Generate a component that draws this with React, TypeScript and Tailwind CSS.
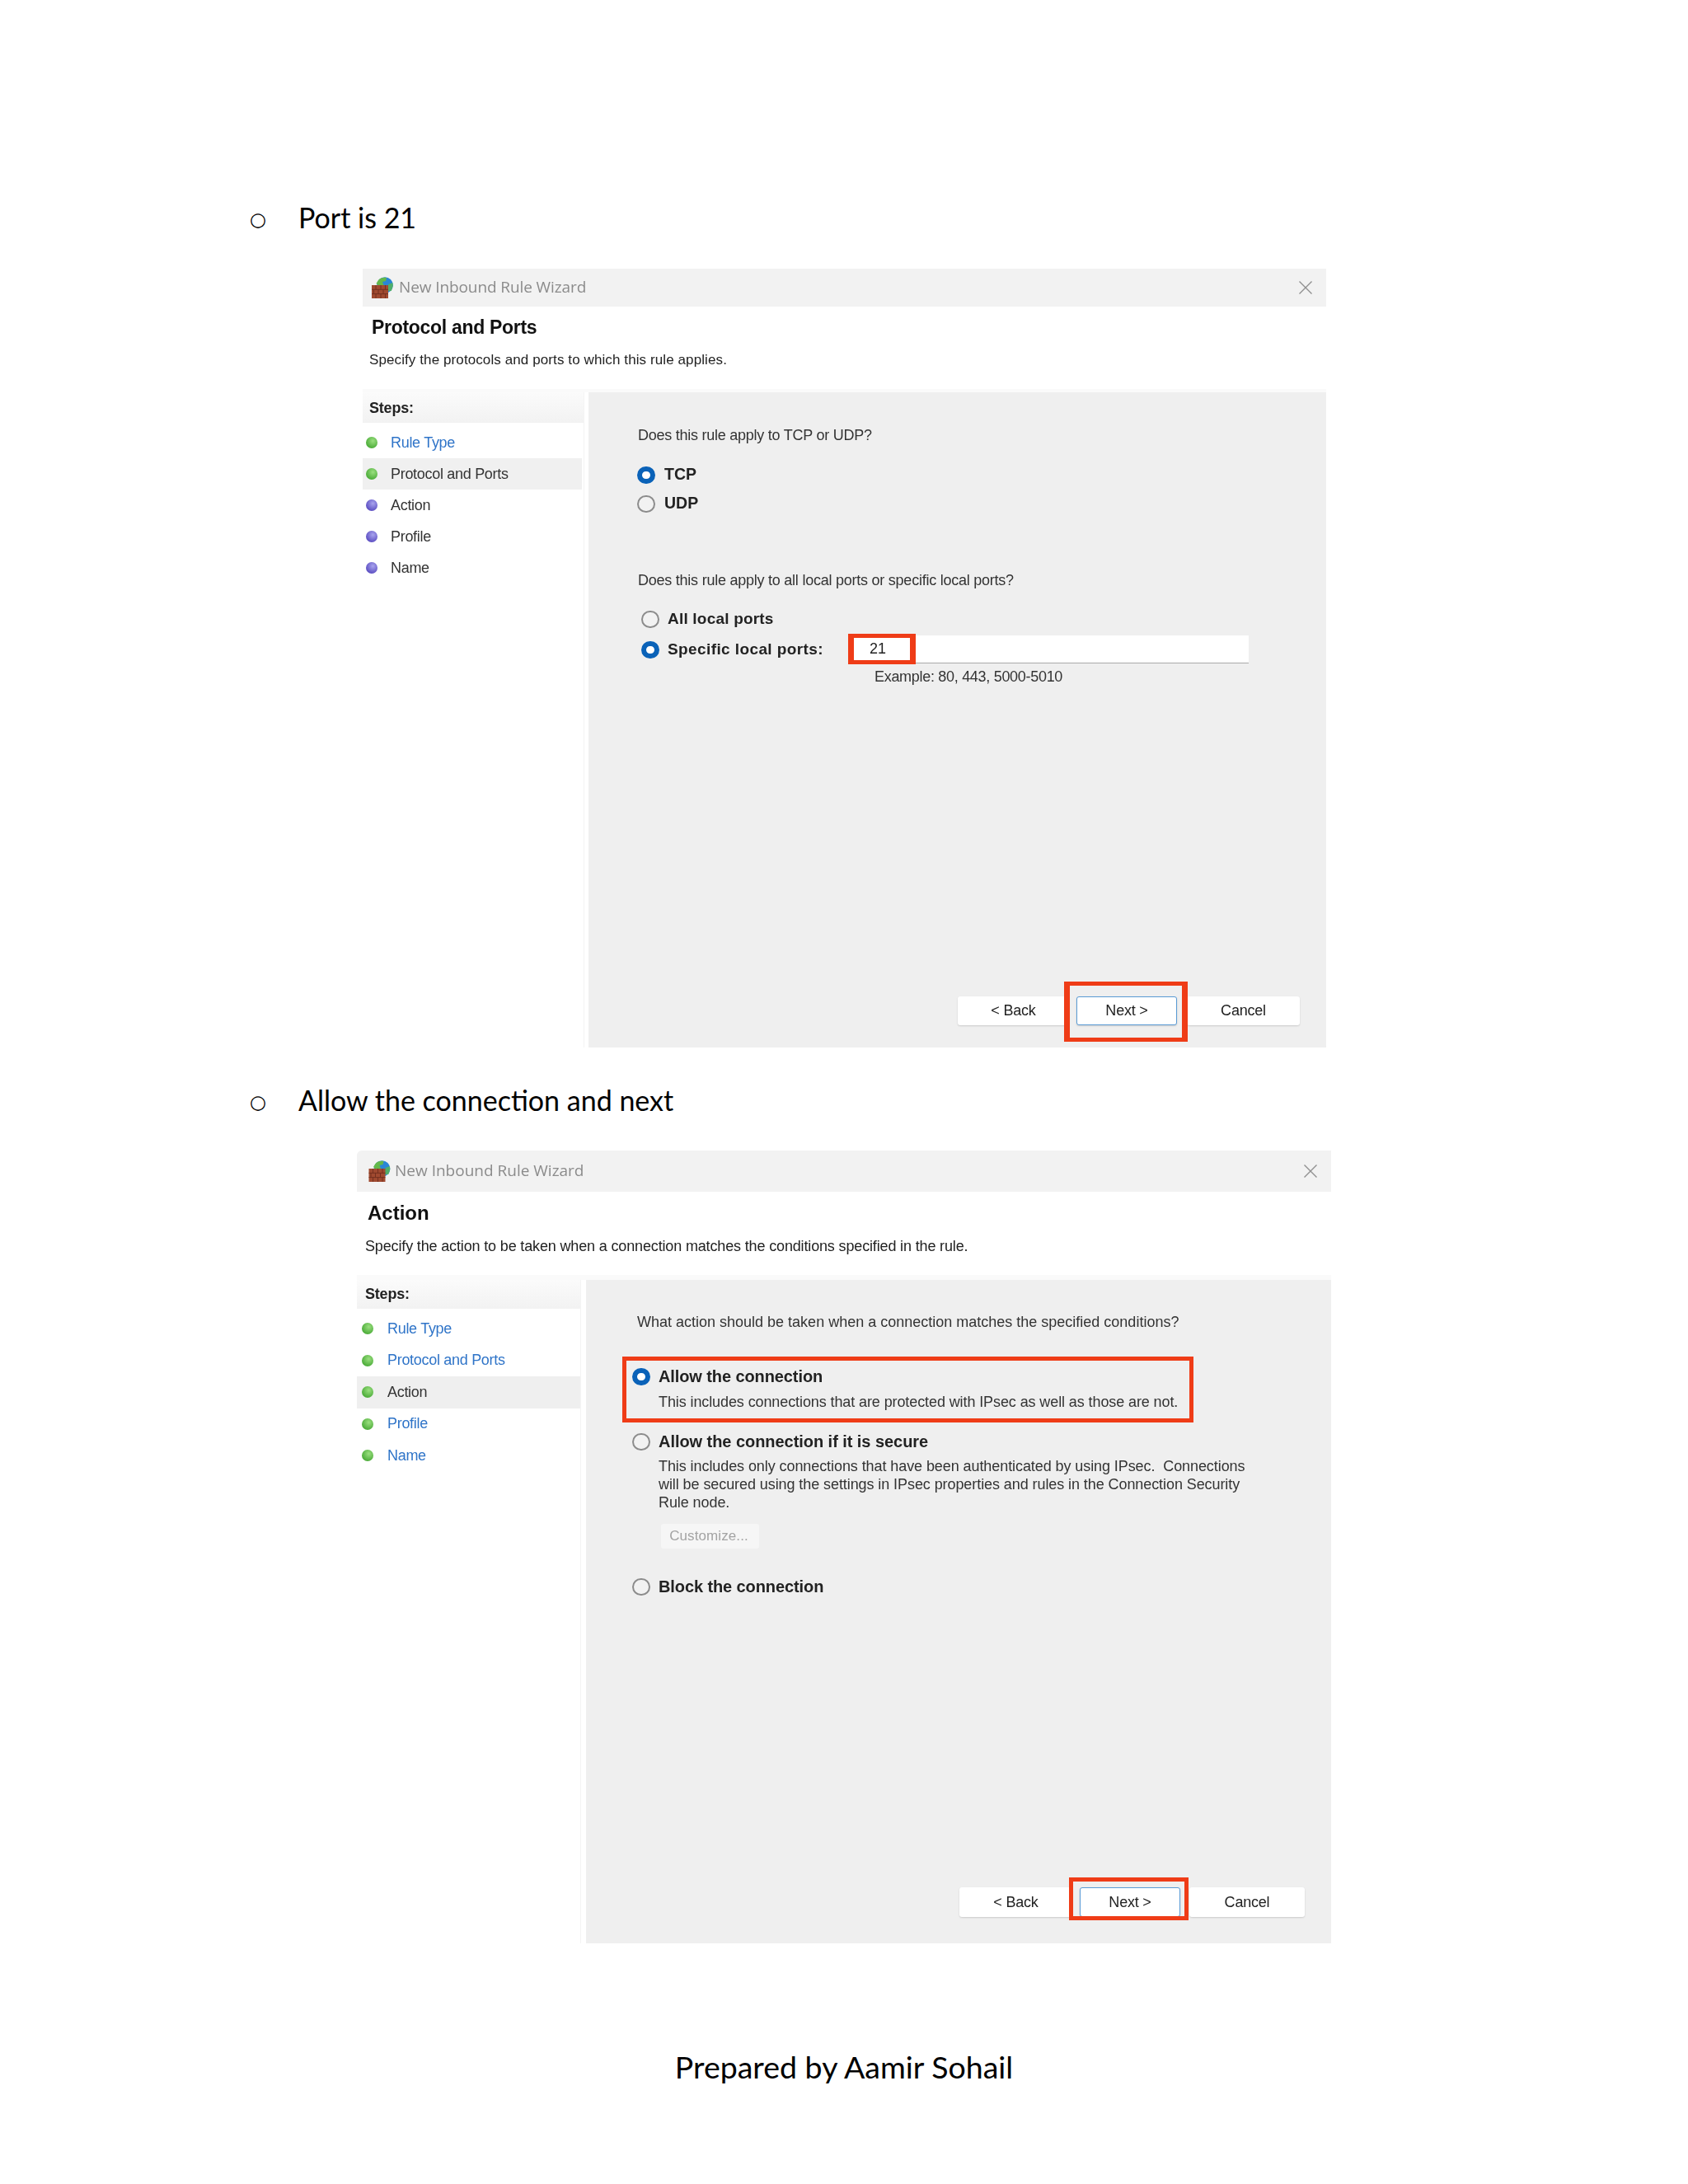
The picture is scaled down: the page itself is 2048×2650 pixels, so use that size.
import React from "react";

const sans = "font-['Liberation_Sans',Arial,sans-serif]";

function FirewallIcon({ className }: { className: string }) {
  return (
    <svg viewBox="0 0 26 26" className={className}>
      <circle cx="16" cy="10" r="9.800" fill="#2a86d6" />
      <path d="M8 4c2.500-3 6.500-3.800 10-3l-1 4-4 1 1.500 4-6 1-3-3z" fill="#63b84a" />
      <path d="M20 9l5.500-2 0.300 4-2 6-4.800 0z" fill="#4fae6a" />
      <rect x="0" y="10" width="20" height="16" fill="#a04a30" />
      <path d="M0 15.300h20M0 20.600h20M5 10v5.300M11 10v5.300M16.500 10v5.300M2.500 15.300v5.300M8 15.300v5.300M14 15.300v5.300M5 20.600v5.400M11 20.600v5.400M16.500 20.600v5.400" stroke="#702e1e" strokeWidth="0.9" fill="none" />
    </svg>
  );
}

function CloseX() {
  return (
    <svg viewBox="0 0 20 20" className="w-[20px] h-[20px]" fill="none" stroke="#8f8f8f" strokeWidth="1.4">
      <path d="M2.500 2.500L17.500 17.500M17.500 2.500L2.500 17.500" />
    </svg>
  );
}

function Radio({ checked }: { checked?: boolean }) {
  return checked ? (
    <span className="block w-[22px] h-[21px] shrink-0 rounded-full border-[6px] border-[#0a62b8] bg-white" />
  ) : (
    <span className="block w-[22px] h-[21px] shrink-0 rounded-full border-2 border-[#8c8c8c] bg-[#f2f2f2]" />
  );
}

function Dot({ purple }: { purple?: boolean }) {
  return purple ? (
    <span className="block w-[14px] h-[14px] shrink-0 rounded-full bg-[radial-gradient(circle_at_60%_35%,#a9a4ee,#5f52c4_70%)]" />
  ) : (
    <span className="block w-[14px] h-[14px] shrink-0 rounded-full bg-[radial-gradient(circle_at_60%_35%,#9adf7f,#4fae3c_70%)]" />
  );
}

function Heading({ children }: { children: React.ReactNode }) {
  return (
    <div className="flex items-center h-[44px] pl-[303px]">
      <span className="w-[59px] mt-[4px] font-['DejaVu_Sans',sans-serif] text-[23px] leading-[44px] text-black">○</span>
      <span className="font-['Lato',sans-serif] text-[34px] leading-[44px] text-black">{children}</span>
    </div>
  );
}

function Button({ label, extra }: { label: string; extra: string }) {
  return (
    <div className={`flex items-center justify-center bg-white rounded-[3px] shadow-[0_1px_2px_rgba(0,0,0,0.15)] text-[18px] tracking-[-0.2px] text-[#222] ${extra}`}>
      {label}
    </div>
  );
}

function WizardOne() {
  const steps = [
    { t: "Rule Type", link: true },
    { t: "Protocol and Ports", active: true },
    { t: "Action", purple: true },
    { t: "Profile", purple: true },
    { t: "Name", purple: true },
  ];
  return (
    <div className={`ml-[440px] mt-[40px] w-[1169px] h-[945px] flex flex-col bg-white ${sans} blur-[0.4px]`}>
      <div className="h-[46px] bg-[#f2f2f2] flex items-center pl-[11px] pr-[15px]">
        <FirewallIcon className="w-[26px] h-[26px]" />
        <span className="ml-[7px] mt-[-2px] text-[19px] tracking-[-0.1px] text-[#8b8b8b] font-['Open_Sans',sans-serif]">New Inbound Rule Wizard</span>
        <span className="ml-auto"><CloseX /></span>
      </div>
      <div className="h-[104px] pt-[13px] border-b-[4px] border-[#fafafa]">
        <div className="h-[24px] pl-[11px] text-[23px] leading-[24px] font-bold tracking-[-0.3px] text-[#111]">Protocol and Ports</div>
        <div className="h-[24px] mt-[16px] pl-[8px] text-[17px] leading-[24px] tracking-[0.1px] text-[#222]">Specify the protocols and ports to which this rule applies.</div>
      </div>
      <div className="flex-1 flex gap-[5px]">
        <div className="w-[269px] border-r border-[#f4f4f4]">
          <div className="h-[37px] pl-[8px] pt-[2px] flex items-center bg-gradient-to-b from-[#fbfbfb] to-[#f2f2f2] text-[18px] font-bold tracking-[-0.2px] text-[#222]">Steps:</div>
          <div className="mt-[5px]">
            {steps.map((s) => (
              <div key={s.t} className={`h-[38px] flex items-center pl-[4px] text-[18px] tracking-[-0.3px] ${s.active ? "bg-[#f0f0f0] mr-[2px]" : ""} ${s.link ? "text-[#2f74c8]" : "text-[#333]"}`}>
                <Dot purple={s.purple} />
                <span className="ml-[16px]">{s.t}</span>
              </div>
            ))}
          </div>
        </div>
        <div className="flex-1 bg-[#efefef] flex flex-col pl-[60px]">
          <div className="mt-[40px] h-[24px] text-[18px] leading-[24px] tracking-[-0.25px] text-[#333]">Does this rule apply to TCP or UDP?</div>
          <div className="mt-[24px] ml-[-1px] h-[24px] flex items-center gap-[11px] text-[19.500px] font-bold text-[#222]"><Radio checked />TCP</div>
          <div className="mt-[11px] ml-[-1px] h-[24px] flex items-center gap-[11px] text-[19.500px] font-bold text-[#222]"><Radio />UDP</div>
          <div className="mt-[69px] h-[24px] text-[18px] leading-[24px] tracking-[-0.24px] text-[#333]">Does this rule apply to all local ports or specific local ports?</div>
          <div className="mt-[23px] ml-[4px] h-[24px] flex items-center gap-[10px] text-[19px] font-bold tracking-[0.2px] text-[#222]"><Radio />All local ports</div>
          <div className="mt-[7px] ml-[4px] h-[36px] flex items-center text-[19px] font-bold tracking-[0.4px] text-[#222]">
            <Radio checked />
            <span className="ml-[10px] w-[219px]">Specific local ports:</span>
            <div className="relative w-[486px] h-[34px] bg-white border-b border-[#a9a9a9] pl-[26px] flex items-center font-normal text-[18px] tracking-normal text-[#222]">
              21
              <span className="absolute left-0 top-[-2px] w-[82px] h-[37px] border-x-[7px] border-y-[5px] border-[#ef3c17]" />
            </div>
          </div>
          <div className="mt-[3px] ml-[287px] h-[24px] text-[18px] leading-[24px] tracking-[-0.3px] text-[#333]">Example: 80, 443, 5000-5010</div>
          <div className="mt-auto mb-[27px] mr-[32px] flex justify-end">
            <Button label="< Back" extra="w-[135px] h-[35px] mr-[9px]" />
            <div className="relative">
              <Button label="Next >" extra="w-[122px] h-[35px] border border-[#5a9bd5]" />
              <span className="absolute left-[-15px] right-[-13px] top-[-18px] bottom-[-20px] border-x-[7px] border-y-[5px] border-[#ef3c17]" />
            </div>
            <Button label="Cancel" extra="w-[137px] h-[35px] ml-[12px]" />
          </div>
        </div>
      </div>
    </div>
  );
}

function WizardTwo() {
  const steps = [
    { t: "Rule Type", link: true },
    { t: "Protocol and Ports", link: true },
    { t: "Action", active: true },
    { t: "Profile", link: true },
    { t: "Name", link: true },
  ];
  return (
    <div className={`ml-[433px] mt-[39px] w-[1182px] h-[962px] flex flex-col bg-white ${sans} blur-[0.4px]`}>
      <div className="h-[50px] bg-[#f2f2f2] rounded-tl-[6px] flex items-center pl-[14px] pr-[15px]">
        <FirewallIcon className="w-[27px] h-[26px]" />
        <span className="ml-[5px] mt-[-2px] text-[19px] text-[#8b8b8b] font-['Open_Sans',sans-serif]">New Inbound Rule Wizard</span>
        <span className="ml-auto"><CloseX /></span>
      </div>
      <div className="h-[107px] pt-[14px] border-b-[6px] border-[#fafafa]">
        <div className="h-[24px] pl-[13px] text-[24px] leading-[24px] font-bold text-[#111]">Action</div>
        <div className="h-[24px] mt-[16px] pl-[10px] text-[18px] leading-[24px] tracking-[-0.15px] text-[#222]">Specify the action to be taken when a connection matches the conditions specified in the rule.</div>
      </div>
      <div className="flex-1 flex gap-[6px]">
        <div className="w-[272px] border-r border-[#f4f4f4]">
          <div className="h-[35px] pl-[10px] flex items-center bg-gradient-to-b from-[#fbfbfb] to-[#f2f2f2] text-[18px] font-bold tracking-[-0.2px] text-[#222]">Steps:</div>
          <div className="mt-[5px]">
            {steps.map((s) => (
              <div key={s.t} className={`h-[38.500px] flex items-center pl-[6px] text-[18px] tracking-[-0.3px] ${s.active ? "bg-[#efefef]" : ""} ${s.link ? "text-[#2f74c8]" : "text-[#333]"}`}>
                <Dot />
                <span className="ml-[17px]">{s.t}</span>
              </div>
            ))}
          </div>
        </div>
        <div className="flex-1 bg-[#efefef] flex flex-col pl-[62px]">
          <div className="mt-[39px] h-[24px] text-[18px] leading-[24px] text-[#333]">What action should be taken when a connection matches the specified conditions?</div>
          <div className="mt-[30px] ml-[-18px] w-[693px] h-[80px] border-[5px] border-[#ef3c17] pl-[7px] pt-[7px]">
            <div className="h-[24px] flex items-center gap-[10px] text-[20px] font-bold tracking-[-0.1px] text-[#222]"><Radio checked />Allow the connection</div>
            <div className="mt-[7px] pl-[32px] h-[24px] text-[18px] leading-[24px] tracking-[-0.1px] text-[#333]">This includes connections that are protected with IPsec as well as those are not.</div>
          </div>
          <div className="mt-[11px] ml-[-6px] h-[24px] flex items-center gap-[10px] text-[20px] font-bold tracking-[-0.05px] text-[#222]"><Radio />Allow the connection if it is secure</div>
          <div className="mt-[7px] ml-[26px] text-[18px] leading-[22px] tracking-[-0.08px] text-[#333]">
            <div>This includes only connections that have been authenticated by using IPsec.&nbsp; Connections</div>
            <div>will be secured using the settings in IPsec properties and rules in the Connection Security</div>
            <div>Rule node.</div>
          </div>
          <div className="mt-[15px] ml-[29px] w-[119px] h-[30px] bg-[#f6f6f6] rounded-[3px] flex items-center justify-center pr-[3px] text-[17px] tracking-[0.1px] text-[#a3a3a3]">Customize...</div>
          <div className="mt-[34px] ml-[-6px] h-[24px] flex items-center gap-[10px] text-[20px] font-bold tracking-[-0.1px] text-[#222]"><Radio />Block the connection</div>
          <div className="mt-auto mb-[32px] mr-[32px] flex justify-end">
            <Button label="< Back" extra="w-[137px] h-[36px] mr-[9px]" />
            <div className="relative">
              <Button label="Next >" extra="w-[122px] h-[36px] border border-[#5a9bd5]" />
              <span className="absolute left-[-13px] right-[-10px] top-[-12px] bottom-[-4px] border-[5px] border-[#ef3c17]" />
            </div>
            <Button label="Cancel" extra="w-[140px] h-[36px] ml-[11px]" />
          </div>
        </div>
      </div>
    </div>
  );
}

export default function App() {
  return (
    <div className="w-[2048px] h-[2650px] bg-white pt-[242px] overflow-hidden">
      <Heading>Port is 21</Heading>
      <WizardOne />
      <div className="mt-[42px]">
        <Heading>Allow the connection and next</Heading>
      </div>
      <WizardTwo />
      <div className="mt-[128px] h-[44px] text-center font-['Lato',sans-serif] text-[37.500px] leading-[44px] text-black">Prepared by Aamir Sohail</div>
    </div>
  );
}
